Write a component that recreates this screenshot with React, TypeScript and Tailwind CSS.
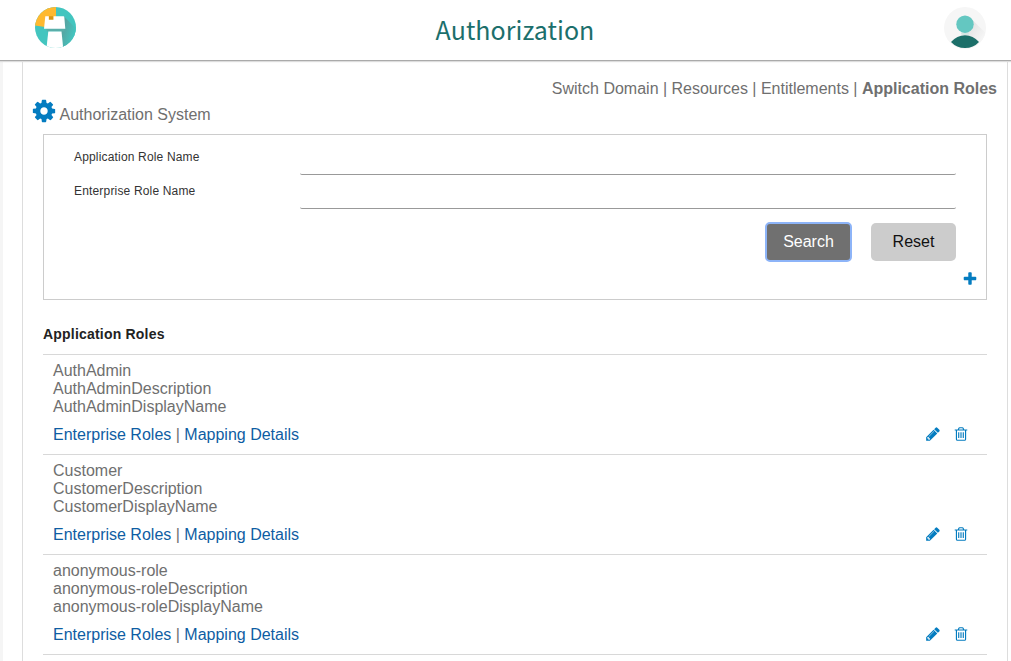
import type { ReactNode } from 'react';

const COG =
  'M1152 896q0-106-75-181t-181-75-181 75-75 181 75 181 181 75 181-75 75-181zm512-109v222q0 12-8 23t-20 13l-185 28q-19 54-39 91 35 50 107 138 10 12 10 25t-9 23q-27 37-99 108t-94 71q-12 0-26-9l-138-108q-44 23-91 38-16 136-29 186-7 28-36 28h-222q-14 0-24.5-8.5t-11.5-21.5l-28-184q-49-16-90-37l-141 107q-10 9-25 9-14 0-25-11-126-114-165-168-7-10-7-23 0-12 8-23 15-21 51-66.5t54-70.5q-27-50-41-99l-183-27q-13-2-21-12.5t-8-23.5v-222q0-12 8-23t19-13l186-28q14-46 39-92-40-57-107-138-10-12-10-24 0-10 9-23 26-36 98.5-107.5t94.5-71.5q13 0 26 10l138 107q44-23 91-38 16-136 29-186 7-28 36-28h222q14 0 24.5 8.5t11.5 21.5l28 184q49 16 90 37l142-107q9-9 24-9 13 0 25 10 129 119 165 170 7 8 7 22 0 12-8 23-15 21-51 66.5t-54 70.5q26 50 41 98l183 28q13 2 21 12.5t8 23.5z';
const PENCIL =
  'M491 1536l91-91-235-235-91 91v107h128v128h107zm523-928q0-22-22-22-10 0-17 7l-542 542q-7 7-7 17 0 22 22 22 10 0 17-7l542-542q7-7 7-17zm-54-192l416 416-832 832h-416v-416zm683 96q0 53-37 90l-166 166-416-416 166-165q36-38 90-38 53 0 91 38l235 234q37 39 37 91z';
const TRASH =
  'M704 736v576q0 14-9 23t-23 9h-64q-14 0-23-9t-9-23v-576q0-14 9-23t23-9h64q14 0 23 9t9 23zm256 0v576q0 14-9 23t-23 9h-64q-14 0-23-9t-9-23v-576q0-14 9-23t23-9h64q14 0 23 9t9 23zm256 0v576q0 14-9 23t-23 9h-64q-14 0-23-9t-9-23v-576q0-14 9-23t23-9h64q14 0 23 9t9 23zm128 724v-948h-896v948q0 22 7 40.5t14.5 27 10.5 8.5h832q3 0 10.5-8.5t14.5-27 7-40.5zm-672-1076h448l-48-117q-7-9-17-11h-317q-10 2-17 11zm928 32v64q0 14-9 23t-23 9h-96v948q0 83-47 143.5t-113 60.5h-832q-66 0-113-58.5t-47-141.5v-952h-96q-14 0-23-9t-9-23v-64q0-14 9-23t23-9h309l70-167q15-37 54-63t79-26h320q40 0 79 26t54 63l70 167h309q14 0 23 9t9 23z';
const PLUS =
  'M1600 736v192q0 40-28 68t-68 28h-416v416q0 40-28 68t-68 28h-192q-40 0-68-28t-28-68v-416h-416q-40 0-68-28t-28-68v-192q0-40 28-68t68-28h416v-416q0-40 28-68t68-28h192q40 0 68 28t28 68v416h416q40 0 68 28t28 68z';

function Icon({ path, className }: { path: string; className: string }) {
  return (
    <svg viewBox="0 0 1792 1792" fill="currentColor" className={`shrink-0 text-[#047cc0] ${className}`}>
      <path d={path} />
    </svg>
  );
}

function Logo() {
  return (
    <svg viewBox="0 0 41 41" className="h-[41px] w-[41px]">
      <defs>
        <clipPath id="disc">
          <circle cx="20.5" cy="20.5" r="20.5" />
        </clipPath>
        <linearGradient id="shade" x1="0" y1="0" x2="1" y2="0.6">
          <stop offset="0.1" stopColor="#5c9b99" />
          <stop offset="0.85" stopColor="#43c5bf" />
        </linearGradient>
      </defs>
      <g clipPath="url(#disc)">
        <rect width="41" height="41" fill="#43c5bf" />
        <path d="M29 9.500l13 13v20H28L26 24z" fill="url(#shade)" />
        <path d="M0 0h21v15L10 20 0 18.500z" fill="#ffb92f" />
        <path d="M13.800 9.300h4.700v4h-4.700z" fill="#d99414" />
        <path d="M11 21h18.500v3.500H12z" fill="#5aaea9" />
        <path d="M10.300 9.300h3.500v3.500h4.700V9.300h9.900q.8 0 .9.800l1 11.600H9z" fill="#fff" />
        <path d="M13.300 24.500h13.200L28.200 41H11.500z" fill="#fff" />
      </g>
    </svg>
  );
}

function Avatar() {
  return (
    <svg viewBox="0 0 42 42" className="h-[42px] w-[42px]">
      <defs>
        <clipPath id="face">
          <circle cx="21" cy="21" r="21" />
        </clipPath>
        <linearGradient id="cast" x1="0" y1="0" x2="1" y2="1">
          <stop offset="0.1" stopColor="#dedede" />
          <stop offset="0.75" stopColor="#f6f6f6" />
        </linearGradient>
      </defs>
      <g clipPath="url(#face)">
        <rect width="42" height="42" fill="#f6f6f6" />
        <path d="M27 11.500l16 16V42H33l-13-16z" fill="url(#cast)" />
        <ellipse cx="21" cy="26.600" rx="4" ry="1.500" fill="#d5e5e3" />
        <circle cx="21" cy="17.200" r="8.700" fill="#64c7c1" />
        <path d="M7 35q6-6.800 14-6.800T35 35q-5.500 6-14 6T7 35z" fill="#1c6f69" />
      </g>
    </svg>
  );
}

function Field({ label }: { label: string }) {
  return (
    <label className="flex h-[34px] pl-[30px] pr-[30px]">
      <span className="w-[226px] pt-[9px] text-[12px] leading-[14px] tracking-[0.17px] text-[#333]">{label}</span>
      <input className="h-[34px] min-w-0 flex-1 rounded-[2px] border-b border-[#999] px-1 outline-none" />
    </label>
  );
}

function Link({ children }: { children: ReactNode }) {
  return <a href="#">{children}</a>;
}

const roles = ['AuthAdmin', 'Customer', 'anonymous-role'];

function RoleRow({ name }: { name: string }) {
  return (
    <li className="h-[100px] border-b border-[#d8d8d8] px-2.5 pt-[7px] text-[16px] leading-[18px] text-[#6f6f6f]">
      <p>{name}</p>
      <p>{name}Description</p>
      <p>{name}DisplayName</p>
      <div className="mt-2.5 flex items-start justify-between text-[#0e5da3]">
        <div>
          <Link>Enterprise Roles</Link> <span className="text-[#6f6f6f]">|</span> <Link>Mapping Details</Link>
        </div>
        <div className="flex h-4 gap-3 pr-2">
          <button aria-label="Edit">
            <Icon path={PENCIL} className="h-4 w-4" />
          </button>
          <button aria-label="Delete">
            <Icon path={TRASH} className="h-4 w-4" />
          </button>
        </div>
      </div>
    </li>
  );
}

export default function App() {
  return (
    <div className="flex h-[661px] w-[1011px] flex-col overflow-hidden bg-white font-['Liberation_Sans',Arial,sans-serif]">
      <header className="z-10 flex h-[61px] shrink-0 items-start justify-between border-b border-[#aaa] bg-white pl-[35px] pr-[25px] pt-[7px] shadow-[0_1px_1px_#ddd]">
        <Logo />
        <h1 className="pl-[10px] pt-[2px] font-['Noto_Sans_CJK_SC',sans-serif] text-[25px] leading-[40px] tracking-[0.05px] text-[#1c6f6c]">
          Authorization
        </h1>
        <Avatar />
      </header>
      <div className="flex min-h-0 flex-1 border-l-[3px] border-[#f5f5f5] pl-[19px] pr-[3px]">
        <main className="min-w-0 flex-1 border-x border-[#ddd]">
          <nav className="flex justify-end gap-[4.400px] pr-2.5 pt-[19px] text-[16px] leading-[18px] text-[#6f6f6f]">
            <Link>Switch Domain</Link>
            <span>|</span>
            <Link>Resources</Link>
            <span>|</span>
            <Link>Entitlements</Link>
            <span>|</span>
            <b>Application Roles</b>
          </nav>
          <div className="flex h-[36px] items-start pl-2 text-[16px] leading-[18px] text-[#6f6f6f]">
            <Icon path={COG} className="h-[26px] w-[26px]" />
            <h2 className="ml-[2.500px] pt-2">Authorization System</h2>
          </div>
          <section className="mx-5 h-[166px] border border-[#ccc] pt-[6px]">
            <Field label="Application Role Name" />
            <Field label="Enterprise Role Name" />
            <div className="mt-3.5 flex justify-end gap-5 pr-[30px] text-[16px]">
              <button className="h-[38px] w-[85px] rounded-[4px] bg-[#707070] text-white outline-2 outline-[#8db4f8] -outline-offset-1">
                Search
              </button>
              <button className="h-[38px] w-[85px] rounded-[5px] bg-[#ccc] text-[#111]">Reset</button>
            </div>
            <div className="mt-[10px] flex justify-end pr-2">
              <Icon path={PLUS} className="h-4 w-4" />
            </div>
          </section>
          <h3 className="mx-5 h-[55px] border-b border-[#d8d8d8] pt-[26px] text-[14px] font-bold leading-[16px] tracking-[0.2px] text-[#222]">
            Application Roles
          </h3>
          <ul className="mx-5">
            {roles.map((name) => (
              <RoleRow key={name} name={name} />
            ))}
          </ul>
        </main>
      </div>
    </div>
  );
}
